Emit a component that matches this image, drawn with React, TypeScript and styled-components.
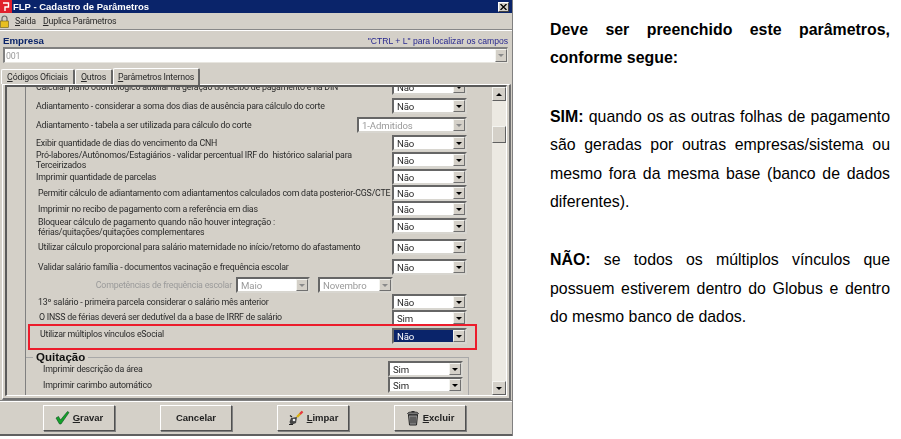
import React from "react";
import styled, { createGlobalStyle } from "styled-components";

const Global = createGlobalStyle`
  html, body { margin: 0; padding: 0; background: #fff; }
  #root { width: 901px; height: 439px; overflow: hidden; }
`;

const Page = styled.div`
  display: flex;
  width: 901px;
  height: 439px;
  background: #fff;
  font-family: "Liberation Sans", Arial, sans-serif;
`;

const AppWindow = styled.div`
  position: relative;
  width: 513px;
  height: 436px;
  flex: none;
  display: flex;
  flex-direction: column;
  background: #d4d0c8;
  font-family: Roboto, "Liberation Sans", sans-serif;
  font-size: 8.8px;
  letter-spacing: -0.2px;
  color: #2a2a2a;
  filter: blur(0.3px);
  border-right: 1px solid #808080;
  box-sizing: border-box;
`;

const TitleBar = styled.div`
  height: 13px;
  background: #0a246a;
  display: flex;
  align-items: center;
  color: #fff;
  font-family: "Liberation Sans", sans-serif;
  font-size: 9.5px;
  letter-spacing: 0;
  font-weight: 700;
`;

const TitleText = styled.span`
  flex: 1;
  padding-left: 1px;
`;

const CloseBtn = styled.div`
  width: 11px;
  height: 10px;
  margin-right: 3px;
  background: #d4d0c8;
  border: 1px solid;
  border-color: #fff #404040 #404040 #fff;
  box-sizing: border-box;
  color: #000;
  display: flex;
  align-items: center;
  justify-content: center;
`;

const MenuBar = styled.div`
  height: 16px;
  display: flex;
  align-items: center;
  gap: 7px;
  border-bottom: 1px solid #888;
  box-shadow: 0 1px 0 #fff;
`;

const MenuItem = styled.span`
  &:first-of-type { margin-left: -1px; }
`;

const EmpresaSection = styled.div`
  padding: 5px 0 0 3px;
`;

const EmpresaHead = styled.div`
  display: flex;
  justify-content: space-between;
  align-items: flex-end;
  height: 11px;
  width: 505px;
`;

const EmpresaLabel = styled.span`
  color: #0a246a;
  font-family: "Liberation Sans", sans-serif;
  font-weight: 700;
  font-size: 9.7px;
  letter-spacing: 0;
`;

const Hint = styled.span`
  color: #27278f;
  font-family: "Liberation Sans", sans-serif;
  font-size: 8.6px;
  letter-spacing: 0;
`;

const EmpresaInput = styled.div`
  margin-top: 1px;
  height: 16px;
  width: 505px;
  box-sizing: border-box;
  background: #fff;
  border: 1px solid;
  border-color: #808080 #e8e6e0 #e8e6e0 #808080;
  border-top-width: 2px;
  border-left-width: 2px;
  color: #9a9a9a;
  display: flex;
  align-items: center;
  justify-content: space-between;
  padding-left: 1px;
`;

const TabStrip = styled.div`
  margin: 4px 0 0 -2px;
  height: 17px;
  display: flex;
  align-items: flex-end;
`;

const Tab = styled.div<{ $active?: boolean; $w: number }>`
  width: ${(p) => p.$w}px;
  height: ${(p) => (p.$active ? 17 : 15)}px;
  box-sizing: border-box;
  border: 1px solid;
  border-color: #fff #666 transparent #fff;
  border-right-width: 2px;
  border-bottom: none;
  border-radius: 2px 2px 0 0;
  display: flex;
  align-items: center;
  justify-content: center;
  background: #d4d0c8;
  white-space: nowrap;
  position: relative;
  z-index: ${(p) => (p.$active ? 1 : 0)};
  margin-bottom: ${(p) => (p.$active ? -1 : 0)}px;
`;

const TabPanel = styled.div`
  width: 509px;
  height: 316px;
  box-sizing: border-box;
  margin-left: 2px;
  border-top: 1px solid #fff;
  border-left: 1px solid #fff;
  border-right: 2px solid #707070;
  border-bottom: 2px solid #707070;
  padding: 0 2px 2px;
`;

const ScrollFrame = styled.div`
  height: 100%;
  box-sizing: border-box;
  border-top: 2px solid #5a5a5a;
  border-left: 2px solid #5a5a5a;
  border-right: 1px solid #fff;
  border-bottom: 1px solid #fff;
  display: flex;
  padding-left: 18px;
`;

const Content = styled.div`
  flex: 1;
  min-width: 0;
  overflow: hidden;
  border-left: 1px solid #808080;
  display: flex;
  flex-direction: column;
`;

const ScrolledBody = styled.div`
  margin-top: -8px;
  display: flex;
  flex-direction: column;
`;

const Row = styled.div<{ $gap: number; $indent?: number }>`
  height: 16px;
  margin-top: ${(p) => p.$gap}px;
  flex: none;
  display: flex;
  align-items: center;
  padding-left: ${(p) => p.$indent ?? 10}px;
  box-sizing: border-box;
  width: 441px;
`;

const RowLabel = styled.div<{ $disabled?: boolean; $right?: boolean; $up?: number }>`
  flex: 1;
  min-width: 0;
  line-height: 10.5px;
  color: ${(p) => (p.$disabled ? "#9a9a9a" : "#2a2a2a")};
  text-align: ${(p) => (p.$right ? "right" : "left")};
  padding-right: ${(p) => (p.$right ? 4 : 0)}px;
  transform: translateY(${(p) => -(p.$up ?? 0)}px);
  white-space: nowrap;
`;

const Combo = styled.div<{ $w?: number; $disabled?: boolean; $selected?: boolean }>`
  width: ${(p) => p.$w ?? 75}px;
  height: 16px;
  flex: none;
  box-sizing: border-box;
  background: #fff;
  border: 2px solid;
  border-color: #666 #d8d6d0 #d8d6d0 #666;
  display: flex;
  align-items: center;
  justify-content: space-between;
  padding-left: ${(p) => (p.$selected ? 0 : 3)}px;
  color: ${(p) => (p.$disabled ? "#9a9a9a" : "#2a2a2a")};
  font-size: 9.6px;
  letter-spacing: -0.1px;
`;

const ComboValue = styled.span<{ $selected?: boolean }>`
  flex: ${(p) => (p.$selected ? 1 : "none")};
  height: 100%;
  padding-left: ${(p) => (p.$selected ? 3 : 0)}px;
  background: ${(p) => (p.$selected ? "#0a246a" : "transparent")};
  color: ${(p) => (p.$selected ? "#fff" : "inherit")};
  display: flex;
  align-items: center;
`;

const ComboArrow = styled.span<{ $disabled?: boolean }>`
  width: 12px;
  height: 100%;
  flex: none;
  box-sizing: border-box;
  background: #d4d0c8;
  border: 1px solid;
  border-color: #f4f4f0 #707070 #707070 #f4f4f0;
  display: flex;
  align-items: center;
  justify-content: center;
  &::after {
    content: "";
    border-left: 3px solid transparent;
    border-right: 3px solid transparent;
    border-top: 3px solid ${(p) => (p.$disabled ? "#8a8a8a" : "#000")};
  }
`;

const Competencia = styled.div`
  display: flex;
  gap: 8px;
  flex: none;
  margin-right: 74px;
`;

const GroupBox = styled.div`
  flex: none;
  margin: 13px 0 0 -1px;
  width: 444px;
  height: 60px;
  box-sizing: border-box;
  border-top: 1px solid #a8a8a8;
  border-left: 1px solid #a8a8a8;
  border-right: 1px solid #a8a8a8;
  position: relative;
  padding-top: 3px;
`;

const GroupLegend = styled.span`
  position: absolute;
  top: -8px;
  left: 7px;
  padding: 0 3px;
  background: #d4d0c8;
  font-family: "Liberation Sans", sans-serif;
  font-weight: 700;
  font-size: 11.5px;
  letter-spacing: 0;
  line-height: 14px;
  color: #111;
`;

const GroupRow = styled.div`
  display: flex;
  align-items: center;
  height: 16px;
  padding-left: 17px;
  width: 437px;
  box-sizing: border-box;
`;

const ScrollTrack = styled.div`
  width: 14px;
  flex: none;
  background: #ece9e2;
  display: flex;
  flex-direction: column;
  align-items: stretch;
`;

const ScrollBtn = styled.div<{ $up?: boolean }>`
  height: 14px;
  flex: none;
  box-sizing: border-box;
  background: #d4d0c8;
  border: 1px solid;
  border-color: #f4f4f0 #606060 #606060 #f4f4f0;
  display: flex;
  align-items: center;
  justify-content: center;
  &::after {
    content: "";
    border-left: 3px solid transparent;
    border-right: 3px solid transparent;
    ${(p) => (p.$up ? "border-bottom: 3px solid #000;" : "border-top: 3px solid #000;")}
  }
`;

const ScrollThumb = styled.div`
  height: 17px;
  margin-top: 25px;
  flex: none;
  box-sizing: border-box;
  background: #d4d0c8;
  border: 1px solid;
  border-color: #f4f4f0 #606060 #606060 #f4f4f0;
`;

const ScrollGap = styled.div`
  flex: 1;
`;

const Highlight = styled.div`
  position: absolute;
  left: 28px;
  top: 324px;
  width: 449px;
  height: 26px;
  box-sizing: border-box;
  border: 2px solid #ec1c2c;
  pointer-events: none;
`;

const ButtonBar = styled.div`
  flex: 1;
  display: flex;
  align-items: center;
  padding-left: 43px;
  gap: 45px;
  border-top: 1px solid #808080;
  border-bottom: 2px solid #606060;
  box-shadow: inset 0 1px 0 #fff;
`;

const ActionButton = styled.div`
  width: 72px;
  height: 26px;
  box-sizing: border-box;
  border: 1px solid;
  border-color: #fff #505050 #505050 #fff;
  box-shadow: 1px 1px 0 #808080;
  display: flex;
  align-items: center;
  justify-content: center;
  gap: 3px;
  font-family: "Liberation Sans", sans-serif;
  font-weight: 700;
  font-size: 9.5px;
  letter-spacing: 0;
  color: #222;
`;

const TextPanel = styled.div`
  width: 340px;
  margin-left: 37px;
  padding-top: 16px;
  font-size: 15.9px;
  line-height: 28.4px;
  color: #000;
  flex: none;
`;

const Para = styled.p<{ $strong?: boolean }>`
  margin: 0 0 30px;
  text-align: justify;
  font-weight: ${(p) => (p.$strong ? 700 : 400)};
  b { font-weight: 700; }
`;

const Logo = () => (
  <svg width="12" height="13" viewBox="0 0 12 13">
    <rect width="12" height="13" fill="#e0202c" />
    <path d="M3 3 H8.5 V7 H5 V11" fill="none" stroke="#fff" strokeWidth="1.4" />
  </svg>
);

const LockIcon = () => (
  <svg width="9" height="13" viewBox="0 0 9 13">
    <path d="M2 6V3.5a2.5 2.5 0 0 1 5 0V6" fill="none" stroke="#666" strokeWidth="1.2" />
    <rect x="0.5" y="6" width="8" height="6.5" fill="#e8c020" stroke="#6a5a10" strokeWidth="0.6" />
  </svg>
);

const CloseGlyph = () => (
  <svg width="7" height="6" viewBox="0 0 7 6">
    <path d="M0.5 0L6.5 6M6.5 0L0.5 6" stroke="#000" strokeWidth="1.3" />
  </svg>
);

const CheckIcon = () => (
  <svg width="15" height="15" viewBox="0 0 15 15">
    <path d="M1 8L3.5 6.5L5.5 10L12.5 1.5L14 2.5L6 14H4.5Z" fill="#14a32a" stroke="#0a4a20" strokeWidth="0.6" />
  </svg>
);

const BroomIcon = () => (
  <svg width="16" height="16" viewBox="0 0 16 16">
    <path d="M9 7L14.5 1.5" stroke="#d8b010" strokeWidth="2.4" />
    <path d="M12 4L14.5 1.5" stroke="#e83050" strokeWidth="2" />
    <path d="M3 8L9 7L8 13L3 15L1.5 12Z" fill="#444" />
    <path d="M2 5.5L4 7M1 14.5H5" stroke="#222" strokeWidth="1.2" />
    <circle cx="6" cy="10" r="1.3" fill="#eee" />
  </svg>
);

const TrashIcon = () => (
  <svg width="14" height="16" viewBox="0 0 14 16">
    <ellipse cx="7" cy="3.5" rx="5.5" ry="1.6" fill="#777" stroke="#222" strokeWidth="0.8" />
    <path d="M5.5 1.7h3" stroke="#222" strokeWidth="1.2" />
    <path d="M2.5 5L3.5 15H10.5L11.5 5Z" fill="#999" stroke="#222" strokeWidth="1" />
    <path d="M5 6.5V13.5M7 6.5V13.5M9 6.5V13.5" stroke="#222" strokeWidth="1" />
  </svg>
);

const Select = ({ v, w, disabled, selected }: { v: string; w?: number; disabled?: boolean; selected?: boolean }) => (
  <Combo $w={w} $disabled={disabled} $selected={selected}>
    <ComboValue $selected={selected}>{v}</ComboValue>
    <ComboArrow $disabled={disabled} />
  </Combo>
);

type RowData = { gap: number; label: React.ReactNode; v: string; indent?: number; up?: number; w?: number; disabled?: boolean; selected?: boolean };

const rows: RowData[] = [
  { gap: 0, label: "Calcular plano odontológico auxiliar na geração do recibo de pagamento e na DIN", v: "Não" },
  { gap: 3, label: "Adiantamento - considerar a soma dos dias de ausência para cálculo do corte", v: "Não" },
  { gap: 3, label: "Adiantamento - tabela a ser utilizada para cálculo do corte", v: "1-Admitidos", w: 110, disabled: true },
  { gap: 2, label: "Exibir quantidade de dias do vencimento da CNH", v: "Não" },
  { gap: 1, label: <>Pró-labores/Autônomos/Estagiários - validar percentual IRF do&nbsp; histórico salarial para<br />Terceirizados</>, v: "Não" },
  { gap: 1, label: "Imprimir quantidade de parcelas", v: "Não" },
  { gap: 0, label: "Permitir cálculo de adiantamento com adiantamentos calculados com data posterior-CGS/CTE", v: "Não", indent: 12 },
  { gap: 0, label: "Imprimir no recibo de pagamento com a referência em dias", v: "Não", indent: 12 },
  { gap: 1, label: <>Bloquear cálculo de pagamento quando não houver integração :<br />férias/quitações/quitações complementares</>, v: "Não", indent: 12, up: -1 },
  { gap: 5, label: "Utilizar cálculo proporcional para salário maternidade no início/retorno do afastamento", v: "Não", indent: 12 },
  { gap: 4, label: "Validar salário família - documentos vacinação e frequência escolar", v: "Não", indent: 12 },
];

const after: RowData[] = [
  { gap: 1, label: "13º salário - primeira parcela considerar o salário mês anterior", v: "Não", indent: 12 },
  { gap: 0, label: "O INSS de férias deverá ser dedutível da a base de IRRF de salário", v: "Sim", indent: 13, up: 1 },
  { gap: 2, label: "Utilizar múltiplos vínculos eSocial", v: "Não", indent: 14, selected: true, up: 2 },
];

const renderRow = (r: RowData, i: number) => (
  <Row key={i} $gap={r.gap} $indent={r.indent}>
    <RowLabel $up={r.up}>{r.label}</RowLabel>
    <Select v={r.v} w={r.w} disabled={r.disabled} selected={r.selected} />
  </Row>
);

export default function App() {
  return (
    <Page>
      <Global />
      <AppWindow>
        <TitleBar>
          <Logo />
          <TitleText>FLP - Cadastro de Parâmetros</TitleText>
          <CloseBtn><CloseGlyph /></CloseBtn>
        </TitleBar>
        <MenuBar>
          <LockIcon />
          <MenuItem><u>S</u>aída</MenuItem>
          <MenuItem><u>D</u>uplica Parâmetros</MenuItem>
        </MenuBar>
        <EmpresaSection>
          <EmpresaHead>
            <EmpresaLabel>Empresa</EmpresaLabel>
            <Hint>"CTRL + L" para localizar os campos</Hint>
          </EmpresaHead>
          <EmpresaInput>
            001
            <ComboArrow $disabled />
          </EmpresaInput>
          <TabStrip>
            <Tab $w={74}><span><u>C</u>ódigos Oficiais</span></Tab>
            <Tab $w={38}><span><u>O</u>utros</span></Tab>
            <Tab $w={87} $active><span><u>P</u>arâmetros Internos</span></Tab>
          </TabStrip>
        </EmpresaSection>
        <TabPanel>
          <ScrollFrame>
            <Content>
              <ScrolledBody>
                {rows.map(renderRow)}
                <Row $gap={2} $indent={0}>
                  <RowLabel $disabled $right>Competências de frequência escolar</RowLabel>
                  <Competencia>
                    <Select v="Maio" w={74} disabled />
                    <Select v="Novembro" w={75} disabled />
                  </Competencia>
                </Row>
                {after.map(renderRow)}
                <GroupBox>
                  <GroupLegend>Quitação</GroupLegend>
                  <GroupRow>
                    <RowLabel>Imprimir descrição da área</RowLabel>
                    <Select v="Sim" />
                  </GroupRow>
                  <GroupRow>
                    <RowLabel>Imprimir carimbo automático</RowLabel>
                    <Select v="Sim" />
                  </GroupRow>
                </GroupBox>
              </ScrolledBody>
            </Content>
            <ScrollTrack>
              <ScrollBtn $up />
              <ScrollThumb />
              <ScrollGap />
              <ScrollBtn />
            </ScrollTrack>
          </ScrollFrame>
        </TabPanel>
        <ButtonBar>
          <ActionButton><CheckIcon /><span><u>G</u>ravar</span></ActionButton>
          <ActionButton>Cancelar</ActionButton>
          <ActionButton><BroomIcon /><span><u>L</u>impar</span></ActionButton>
          <ActionButton><TrashIcon /><span><u>E</u>xcluir</span></ActionButton>
        </ButtonBar>
        <Highlight />
      </AppWindow>
      <TextPanel>
        <Para $strong>Deve ser preenchido este parâmetros, conforme segue:</Para>
        <Para><b>SIM:</b> quando os as outras folhas de pagamento são geradas por outras empresas/sistema ou mesmo fora da mesma base (banco de dados diferentes).</Para>
        <Para><b>NÃO:</b> se todos os múltiplos vínculos que possuem estiverem dentro do Globus e dentro do mesmo banco de dados.</Para>
      </TextPanel>
    </Page>
  );
}
